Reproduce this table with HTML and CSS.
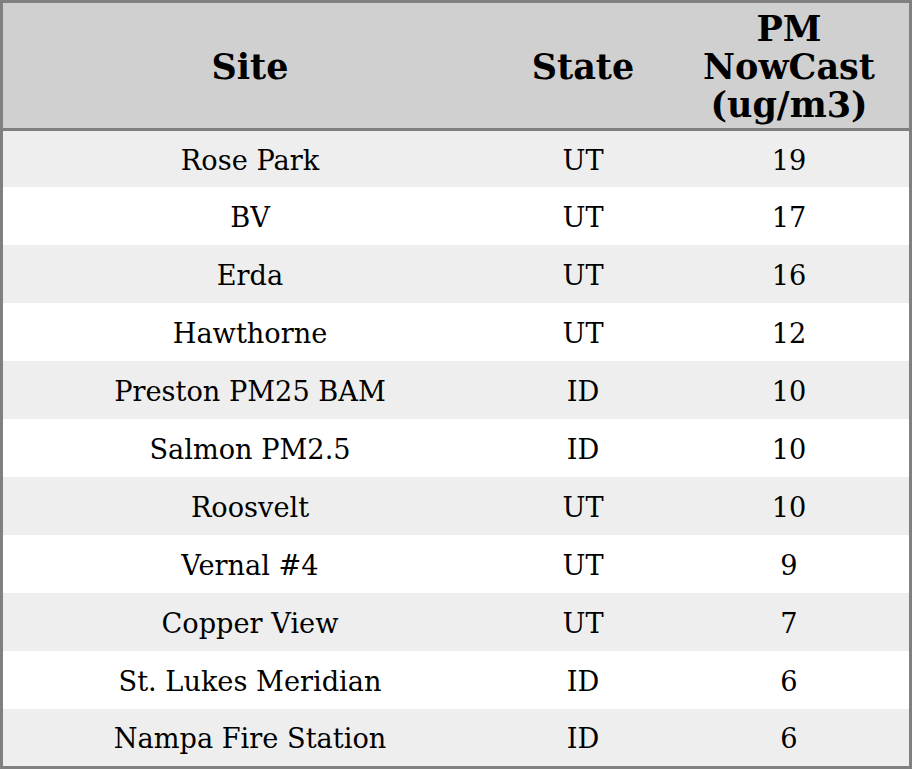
FILE: index.html
```html
<!DOCTYPE html>
<html>
<head>
<meta charset="utf-8">
<link rel="stylesheet" href="styles.css">
</head>
<body>
<table class="aq">
  <colgroup>
    <col class="c-site">
    <col class="c-state">
    <col class="c-pm">
  </colgroup>
  <thead>
    <tr><th>Site</th><th>State</th><th>PM<br>NowCast<br>(ug/m3)</th></tr>
  </thead>
  <tbody>
    <tr><td>Rose Park</td><td>UT</td><td>19</td></tr>
    <tr><td>BV</td><td>UT</td><td>17</td></tr>
    <tr><td>Erda</td><td>UT</td><td>16</td></tr>
    <tr><td>Hawthorne</td><td>UT</td><td>12</td></tr>
    <tr><td>Preston PM25 BAM</td><td>ID</td><td>10</td></tr>
    <tr><td>Salmon PM2.5</td><td>ID</td><td>10</td></tr>
    <tr><td>Roosvelt</td><td>UT</td><td>10</td></tr>
    <tr><td>Vernal #4</td><td>UT</td><td>9</td></tr>
    <tr><td>Copper View</td><td>UT</td><td>7</td></tr>
    <tr><td>St. Lukes Meridian</td><td>ID</td><td>6</td></tr>
    <tr><td>Nampa Fire Station</td><td>ID</td><td>6</td></tr>
  </tbody>
</table>
</body>
</html>
```
FILE: styles.css
```css
html, body {
  margin: 0;
  padding: 0;
  background: #ffffff;
}
.aq {
  width: 912px;
  table-layout: fixed;
  border-collapse: separate;
  border-spacing: 0;
  border: 3px solid #808080;
  font-family: "DejaVu Serif", serif;
  color: #000;
}
.c-site { width: 494px; }
.c-state { width: 172px; }
.c-pm { width: 240px; }
.aq th {
  background: #d0d0d0;
  font-weight: bold;
  font-size: 35px;
  line-height: 38px;
  height: 128px;
  padding: 2px 0 0 0;
  text-align: center;
  vertical-align: middle;
  border-bottom: 3px solid #808080;
  box-sizing: border-box;
}
.aq td {
  font-size: 27.2px;
  height: 58px;
  padding: 2px 0 0 0;
  text-align: center;
  vertical-align: middle;
  box-sizing: border-box;
}
.aq tbody tr:nth-child(odd) td { background: #eeeeee; }
.aq tbody tr:nth-child(even) td { background: #ffffff; }
.aq tbody tr:first-child td { height: 56px; }
.aq tbody tr:last-child td { height: 57px; }
```
